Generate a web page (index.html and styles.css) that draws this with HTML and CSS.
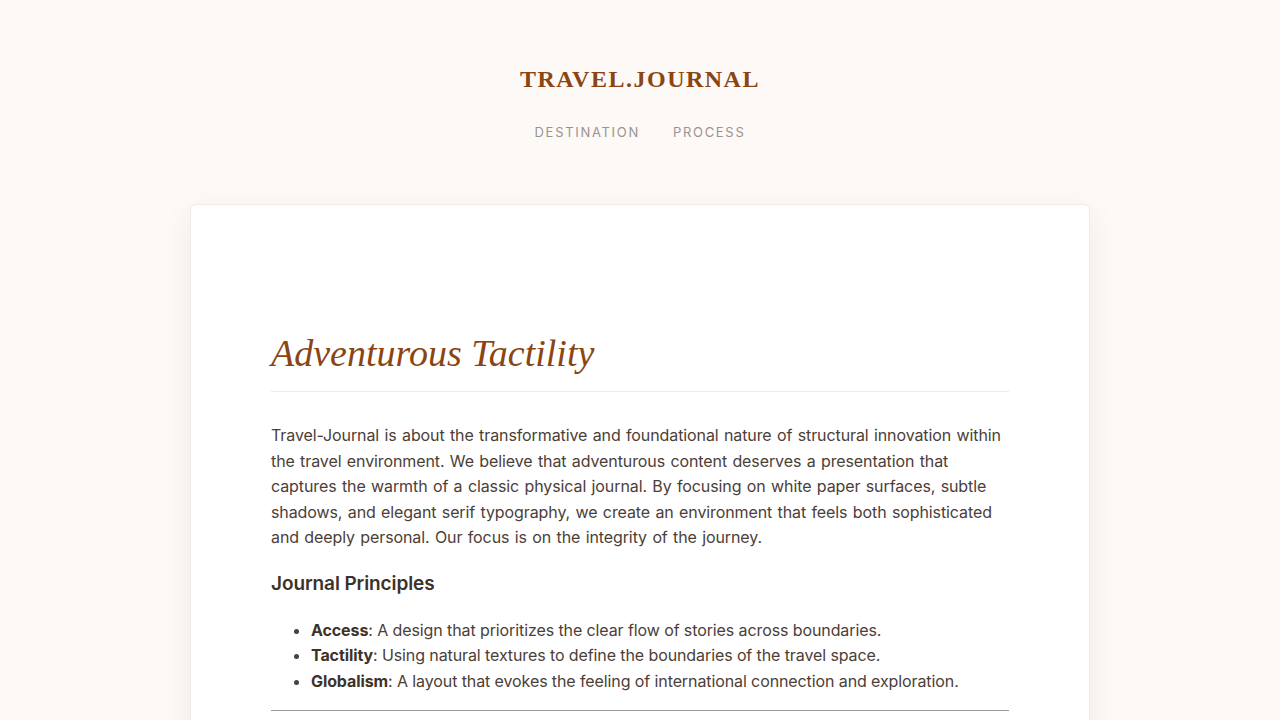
FILE: index.html
```html
<!DOCTYPE html>
<html lang="en">
<head>
<meta charset="utf-8">
<title>Travel.Journal</title>
<link rel="stylesheet" href="styles.css">
</head>
<body>
<header class="site-header">
  <div class="logo">TRAVEL.JOURNAL</div>
  <nav class="nav">
    <a href="#">DESTINATION</a>
    <a href="#">PROCESS</a>
  </nav>
</header>
<main class="card">
  <h1 class="title">Adventurous Tactility</h1>
  <p class="lead">Travel-Journal is about the transformative and foundational nature of structural innovation within the travel environment. We believe that adventurous content deserves a presentation that captures the warmth of a classic physical journal. By focusing on white paper surfaces, subtle shadows, and elegant serif typography, we create an environment that feels both sophisticated and deeply personal. Our focus is on the integrity of the journey.</p>
  <h3 class="subhead">Journal Principles</h3>
  <ul class="principles">
    <li><strong>Access</strong>: A design that prioritizes the clear flow of stories across boundaries.</li>
    <li><strong>Tactility</strong>: Using natural textures to define the boundaries of the travel space.</li>
    <li><strong>Globalism</strong>: A layout that evokes the feeling of international connection and exploration.</li>
  </ul>
  <hr class="rule">
</main>
</body>
</html>
```
FILE: styles.css
```css
* { box-sizing: border-box; }
html, body { margin: 0; padding: 0; }
body {
  background: #fdf9f6;
  font-family: "Inter", "Noto Sans", sans-serif;
  color: #4b4038;
  height: 720px;
  overflow: hidden;
}
.site-header {
  display: flex;
  flex-direction: column;
  align-items: center;
  padding-top: 62px;
}
.logo {
  font-family: "Liberation Serif", serif;
  font-size: 24px;
  font-weight: 700;
  letter-spacing: 1.5px;
  color: #8b4513;
  line-height: 34px;
}
.nav {
  display: flex;
  gap: 33px;
  margin-top: 26px;
}
.nav a {
  font-size: 13px;
  letter-spacing: 1.7px;
  color: #9a9490;
  text-decoration: none;
  line-height: 20px;
}
.card {
  width: 900px;
  margin: 62px auto 0;
  background: #fff;
  border-radius: 6px;
  border: 1px solid #f0ebe6;
  box-shadow: 0 10px 30px rgba(90, 60, 30, 0.08);
  padding: 125px 80px 80px;
}
.title {
  font-family: "Liberation Serif", serif;
  font-style: italic;
  font-weight: 400;
  font-size: 38px;
  color: #8b4513;
  margin: 0;
  line-height: 46px;
  padding-bottom: 15px;
  border-bottom: 1px solid #eeeae6;
}
.lead {
  font-size: 16px;
  line-height: 25.5px;
  margin: 31px 0 0;
  letter-spacing: -0.1px;
  word-spacing: 1px;
}
.subhead {
  font-size: 19px;
  font-weight: 600;
  color: #3d3229;
  margin: 19px 0 0;
  line-height: 28px;
  letter-spacing: -0.1px;
}
.principles {
  margin: 20px 0 0;
  padding-left: 40px;
  font-size: 16px;
  line-height: 25.5px;
  letter-spacing: -0.1px;
}
.principles strong { font-weight: 700; color: #3d3229; }
.rule {
  border: 0;
  border-top: 1px solid #999;
  margin: 16px 0 0;
}
```
